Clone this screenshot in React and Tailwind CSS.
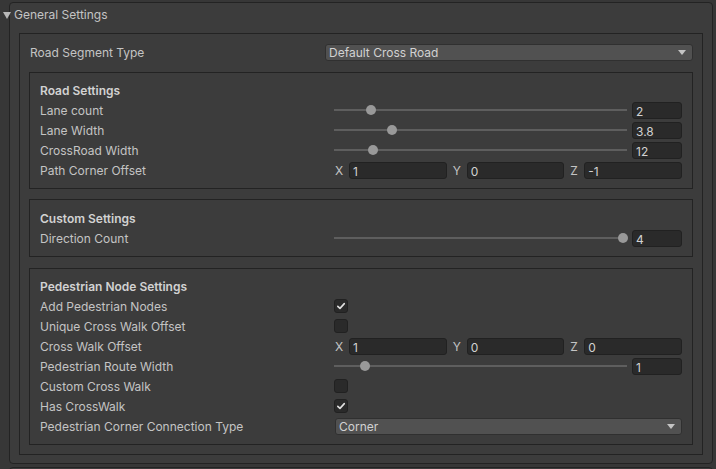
import React from "react";

function Tri({ className }) {
  return (
    <svg width="8" height="5" viewBox="0 0 8 5" className={className}>
      <polygon points="0,0 8,0 4,5" fill="#c4c4c4" />
    </svg>
  );
}

function Field({ value, className = "" }) {
  return (
    <div
      className={
        "h-[17px] rounded-[3px] border border-[#212121] bg-[#2a2a2a] px-[3px] pt-px text-[12px] leading-[15px] text-[#d2d2d2] " +
        className
      }
    >
      {value}
    </div>
  );
}

function Row({ label, children }) {
  return (
    <div className="flex h-[20px] items-center">
      <div className="w-[294px] shrink-0 whitespace-nowrap pt-[2px]">{label}</div>
      <div className="flex flex-1 items-center">{children}</div>
    </div>
  );
}

function Slider({ thumb, value }) {
  return (
    <>
      <div className="relative flex h-[20px] flex-1 items-center">
        <div className="h-[2px] w-full bg-[#5e5e5e]" />
        <div
          className="absolute top-[5px] h-[10px] w-[10px] rounded-full bg-[#999999]"
          style={{ left: thumb - 5 }}
        />
      </div>
      <Field value={value} className="ml-[5px] w-[50px]" />
    </>
  );
}

function Vec({ x, y, z }) {
  const items = [
    ["X", x],
    ["Y", y],
    ["Z", z],
  ];
  return (
    <div className="flex flex-1 gap-[5px]">
      {items.map(([l, v]) => (
        <div key={l} className="flex flex-1 items-center">
          <span className="w-[15px] shrink-0 pl-px pt-[2px]">{l}</span>
          <Field value={v} className="flex-1" />
        </div>
      ))}
    </div>
  );
}

function Check({ on }) {
  return (
    <div className="flex h-[14px] w-[14px] items-center justify-center rounded-[3px] border border-[#212121] bg-[#2a2a2a]">
      {on && (
        <svg width="10" height="10" viewBox="0 0 10 10">
          <path d="M1.8 5.3 L4 7.4 L8.3 2.6" fill="none" stroke="#e0e0e0" strokeWidth="1.6" strokeLinecap="round" strokeLinejoin="round" />
        </svg>
      )}
    </div>
  );
}

function Dropdown({ value, className = "" }) {
  return (
    <div
      className={
        "flex h-[17px] items-center justify-between rounded-[3px] border border-[#303030] bg-[#515151] pl-[3px] pr-[6px] text-[#d2d2d2] " +
        className
      }
    >
      <span className="pt-px leading-[15px]">{value}</span>
      <Tri />
    </div>
  );
}

function Title({ children }) {
  return <div className="flex h-[20px] items-center pt-[2px] font-semibold text-[#d2d2d2]">{children}</div>;
}

export default function App() {
  return (
    <div className="relative h-[469px] w-[716px] overflow-hidden bg-[#373737] pl-[9px] pt-[2px] font-['Inter','Noto_Sans',sans-serif] text-[12px] text-[#c4c4c4]">
      <svg width="8" height="7" viewBox="0 0 8 7" className="absolute left-[3px] top-[12px]">
        <polygon points="0,0 8,0 4,7" fill="#b8b8b8" />
      </svg>
      <div className="h-[462px] w-[704px] rounded-[4px] border border-[#232323] bg-[#3c3c3c]">
        <div className="mb-[8px] mt-[2px] flex h-[20px] items-center pl-[4px]">General Settings</div>
        <div className="ml-[9px] h-[422px] w-[684px] border border-[#232323]">
          <div className="mt-[9px] flex h-[18px] items-center pl-[10px] pr-[9px]">
            <div className="w-[295px] shrink-0 pt-[2px]">Road Segment Type</div>
            <Dropdown value="Default Cross Road" className="flex-1" />
          </div>

          <div className="mx-[9px] mt-[11px] border border-[#232323] px-[10px] pb-[8px] pt-[7px]">
            <Title>Road Settings</Title>
            <Row label="Lane count">
              <Slider thumb={37} value="2" />
            </Row>
            <Row label="Lane Width">
              <Slider thumb={58} value="3.8" />
            </Row>
            <Row label="CrossRoad Width">
              <Slider thumb={39} value="12" />
            </Row>
            <Row label="Path Corner Offset">
              <Vec x="1" y="0" z="-1" />
            </Row>
          </div>

          <div className="mx-[9px] mt-[10px] border border-[#232323] px-[10px] pb-[8px] pt-[8px]">
            <Title>Custom Settings</Title>
            <Row label="Direction Count">
              <Slider thumb={289} value="4" />
            </Row>
          </div>

          <div className="mx-[9px] mt-[11px] border border-[#232323] px-[10px] pb-[8px] pt-[7px]">
            <Title>Pedestrian Node Settings</Title>
            <Row label="Add Pedestrian Nodes">
              <Check on />
            </Row>
            <Row label="Unique Cross Walk Offset">
              <Check />
            </Row>
            <Row label="Cross Walk Offset">
              <Vec x="1" y="0" z="0" />
            </Row>
            <Row label="Pedestrian Route Width">
              <Slider thumb={31} value="1" />
            </Row>
            <Row label="Custom Cross Walk">
              <Check />
            </Row>
            <Row label="Has CrossWalk">
              <Check on />
            </Row>
            <Row label="Pedestrian Corner Connection Type">
              <Dropdown value="Corner" className="ml-px flex-1" />
            </Row>
          </div>
        </div>
      </div>
      <div className="mt-[3px] h-[20px] w-[704px] rounded-t-[4px] border border-[#232323] bg-[#3c3c3c]" />
    </div>
  );
}
